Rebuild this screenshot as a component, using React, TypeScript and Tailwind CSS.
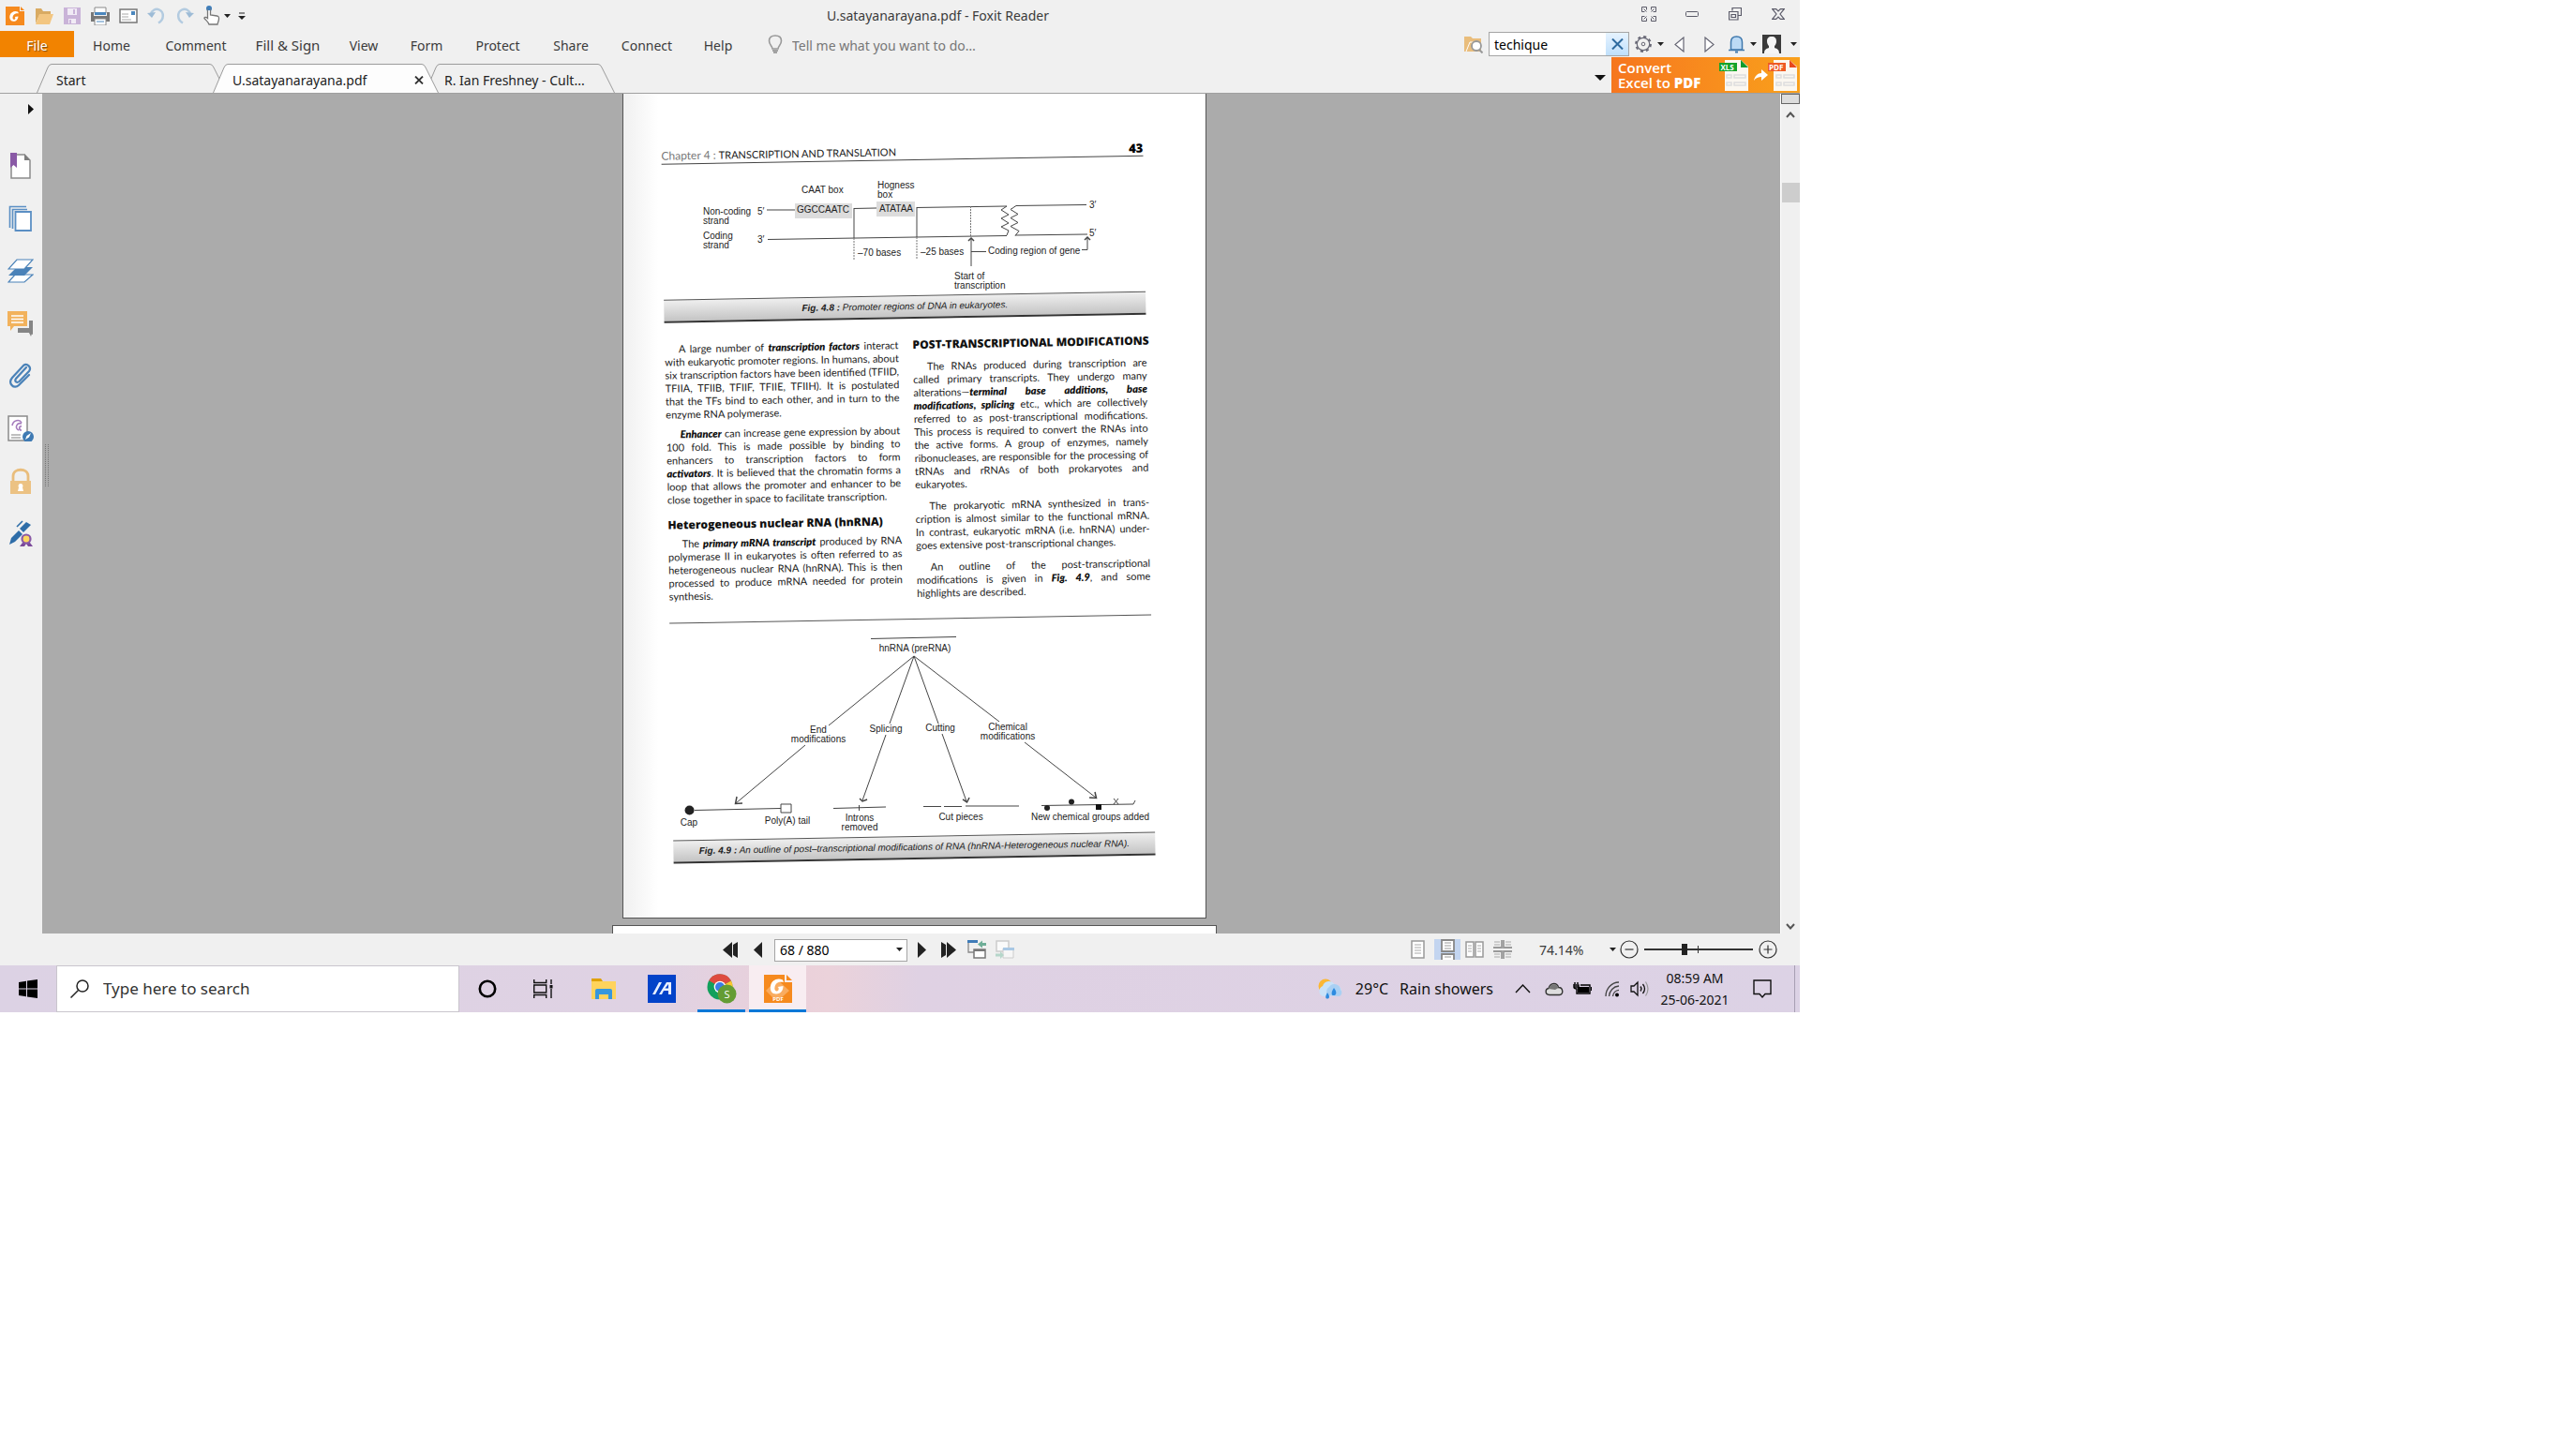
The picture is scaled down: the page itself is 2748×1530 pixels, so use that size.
import React from "react";
import type { ReactNode } from "react";

const INK = "#222";

function Svg({ w, h, children }: { w: number; h: number; children: ReactNode }) {
  return (
    <svg width={w} height={h} viewBox={`0 0 ${w} ${h}`} fill="none" aria-hidden="true" className="block shrink-0">
      {children}
    </svg>
  );
}

function Caret({ big = false }: { big?: boolean }) {
  return big ? (
    <Svg w={12} h={6}>
      <path d="M0 0h12L6 6z" fill="#111" />
    </Svg>
  ) : (
    <Svg w={7} h={4}>
      <path d="M0 0h7L3.500 4z" fill="#222" />
    </Svg>
  );
}

function IconButton({ label, className, children }: { label: string; className: string; children: ReactNode }) {
  return (
    <button type="button" aria-label={label} className={`flex shrink-0 items-center justify-center ${className}`}>
      {children}
    </button>
  );
}

/* ---------- Title bar ---------- */

function FoxitLogo() {
  return (
    <Svg w={20} h={20}>
      <path d="M0 0h15v5h5v15H0z" fill="#f68a1e" />
      <path d="M16 0l4 4h-4z" fill="#f68a1e" />
      <path d="M13 5.500c-3-1.500-7.500 0-8.500 4-.8 3.300.8 6 3.600 6.300 3.200.2 5.200-2.300 5.400-5.300l-3.900.6c.6.500 1 .8.600 1.800-.4 1-1.600 1.300-2.300.4-.9-1.100-.2-3.700 1.100-4.800C10.300 7.500 12 7 14 7.300z" fill="#fff" />
    </Svg>
  );
}

function TitleBar() {
  return (
    <header className="flex h-[33px] items-center">
      <div className="flex h-full w-[265px] shrink-0 items-center pl-1.5">
        <FoxitLogo />
        <IconButton label="Open" className="ml-1.5 w-[30px]">
          <Svg w={20} h={18}>
            <path d="M1 17V1h6l2 3h8v4H5z" fill="#d9ab63" />
            <path d="M5 7h15l-4 11H1z" fill="#f3c681" />
          </Svg>
        </IconButton>
        <IconButton label="Save" className="w-[30px]">
          <Svg w={18} h={18}>
            <path d="M0 0h18v18H0z" fill="#c9b3d8" />
            <path d="M4 1h10v7H4zM5 12h8v5H5z" fill="#f1ebf5" />
            <path d="M10 2h2v5h-2zM6 13h2v4H6z" fill="#c9b3d8" />
          </Svg>
        </IconButton>
        <IconButton label="Print" className="w-[30px]">
          <Svg w={20} h={20}>
            <path d="M4 1h12v6H4z" fill="#fff" stroke="#8a8a8a" />
            <path d="M0 6h3v4h14V6h3v10H0z" fill="#777" />
            <path d="M4 6h12v3H4z" fill="#4a86bd" />
            <path d="M4 13h12v7H4z" fill="#fff" stroke="#8a8a8a" />
            <path d="M6 16h8" stroke="#4a86bd" />
          </Svg>
        </IconButton>
        <IconButton label="Email" className="w-[30px]">
          <Svg w={20} h={16}>
            <path d="M1 1h18v14H1z" fill="#fff" stroke="#777" strokeWidth="1.500" />
            <path d="M13 3h4v4h-4z" fill="#4a86bd" />
            <path d="M3 6h7M3 9h7M3 12h10" stroke="#aaa" />
          </Svg>
        </IconButton>
        <IconButton label="Undo" className="w-[30px]">
          <Svg w={20} h={20}>
            <path d="M4 8c1-4 5-6.500 9-4.500 5 2.500 5.500 10-1 14" stroke="#b3cbe0" strokeWidth="2.500" />
            <path d="M0 7l5 5 4-6z" fill="#9dbbd6" />
          </Svg>
        </IconButton>
        <IconButton label="Redo" className="w-[30px]">
          <Svg w={20} h={20}>
            <path d="M16 8c-1-4-5-6.500-9-4.500-5 2.500-5.500 10 1 14" stroke="#b3cbe0" strokeWidth="2.500" />
            <path d="M20 7l-5 5-4-6z" fill="#9dbbd6" />
          </Svg>
        </IconButton>
        <IconButton label="Touch mode" className="w-[38px] gap-1">
          <Svg w={18} h={21}>
            <circle cx="6" cy="3" r="3" fill="#3c7ebd" />
            <path d="M4.500 13V4c0-2 3-2 3 0v6l7 1c2 .4 2 1 2 3-.2 3-1 3-1.500 6H6c-1-3-3-4-5-6.500-.5-1 1.500-2 3.500 0z" fill="#fff" stroke="#777" strokeWidth="1.300" />
            <path d="M6 2v3" stroke="#3c7ebd" strokeWidth="3" />
          </Svg>
          <Caret />
        </IconButton>
        <IconButton label="Customize toolbar" className="w-[16px]">
          <Svg w={8} h={8}>
            <path d="M1 1h6" stroke="#222" />
            <path d="M0 4h8L4 8z" fill="#222" />
          </Svg>
        </IconButton>
      </div>
      <h1 className="flex-1 text-center text-[14px] leading-5 text-[#3b3b3b]">U.satayanarayana.pdf - Foxit Reader</h1>
      <div className="flex h-full w-[184px] shrink-0 items-center pb-1">
        <IconButton label="Full screen" className="w-[46px] pl-0">
          <Svg w={16} h={16}>
            <path d="M.5 5.500v-5h5M.5 5.500h3M5.500.500v3M10.500.500h5v5M10.500.500v3M15.500 5.500h-3M.5 10.500v5h5M.5 10.500h3M5.500 15.500v-3M10.500 15.500h5v-5M10.500 15.500v-3M15.500 10.500h-3M2.500 2.500l3 3M13.500 2.500l-3 3M2.500 13.500l3-3M13.500 13.500l-3-3" stroke="#5a5a68" />
          </Svg>
        </IconButton>
        <IconButton label="Minimize" className="w-[46px]">
          <Svg w={14} h={6}>
            <rect x=".5" y=".5" width="13" height="5" rx="1" stroke="#5a5a68" />
          </Svg>
        </IconButton>
        <IconButton label="Restore" className="w-[46px]">
          <Svg w={14} h={14}>
            <path d="M4 3.500v-3h9.500v8H10M.5 4.500H10v8.500H.5zM3 7.500h4.500v3H3z" stroke="#5a5a68" strokeWidth="1.200" />
          </Svg>
        </IconButton>
        <IconButton label="Close" className="w-[46px]">
          <Svg w={14} h={12}>
            <path d="M.7.600h4L7 3l2.300-2.400h4L9 6l4.300 5.400h-4L7 9l-2.300 2.400h-4L5 6z" stroke="#5a5a68" strokeWidth="1.200" />
          </Svg>
        </IconButton>
      </div>
    </header>
  );
}

/* ---------- Ribbon menu ---------- */

const menu = [
  { name: "Home", cls: "w-[80px] text-[14px]" },
  { name: "Comment", cls: "w-[100px] text-[14px]" },
  { name: "Fill & Sign", cls: "w-[96px] text-[15px]" },
  { name: "View", cls: "w-[66px] text-[14px]" },
  { name: "Form", cls: "w-[68px] text-[14px]" },
  { name: "Protect", cls: "w-[84px] text-[14px]" },
  { name: "Share", cls: "w-[72px] text-[14px]" },
  { name: "Connect", cls: "w-[90px] text-[14px]" },
  { name: "Help", cls: "w-[62px] text-[14px]" },
];

function MenuBar() {
  return (
    <nav className="flex h-7 items-center text-[#3b3b3b]">
      <button type="button" className="h-7 w-[79px] shrink-0 bg-[#f28300] pt-0.5 text-[14px] text-white [text-shadow:1px_1px_1px_#7a4a10]">
        File
      </button>
      {menu.map((m) => (
        <button key={m.name} type="button" className={`h-7 shrink-0 pt-0.5 whitespace-nowrap ${m.cls}`}>
          {m.name}
        </button>
      ))}
      <label className="ml-[22px] flex items-center gap-[10px]">
        <Svg w={16} h={20}>
          <path d="M5 15c0-3-3.500-4-3.500-8.500C1.500 3 4 1 8 1s6.500 2 6.500 5.500C14.500 11 11 12 11 15z" stroke="#999" strokeWidth="1.600" />
          <path d="M5 17h6M6 19h4" stroke="#888" strokeWidth="1.400" />
        </Svg>
        <input type="text" aria-label="Tell me what you want to do" placeholder="Tell me what you want to do…" className="w-[240px] bg-transparent pt-0.5 text-[14px] text-[#333] outline-none placeholder:text-[#777]" />
      </label>
      <div className="ml-auto flex h-full items-center">
        <Svg w={20} h={20}>
          <path d="M0 2h7l2 2h9v14H0z" fill="#e9bd7c" />
          <path d="M2 18L6 8h4" stroke="#fff" />
          <circle cx="13" cy="12" r="5" fill="#fff" stroke="#999" strokeWidth="1.800" />
          <path d="M16 16l3.500 3.500" stroke="#999" strokeWidth="2" />
        </Svg>
        <div className="ml-1.5 flex h-[26px] w-[150px] border border-[#a5a5a5] bg-white">
          <input type="text" aria-label="Find" defaultValue="techique" className="w-[124px] pl-[5px] text-[14px] text-black outline-none" />
          <IconButton label="Clear search" className="w-6 bg-linear-to-b from-[#e6f3ff] to-[#c0e0fb]">
            <Svg w={13} h={12}>
              <path d="M1 .500l11 11M12 .500l-11 11" stroke="#2d6a9f" strokeWidth="2" />
            </Svg>
          </IconButton>
        </div>
        <IconButton label="Search options" className="ml-0.5 w-[38px] gap-1.5">
          <Svg w={18} h={18}>
            <circle cx="9" cy="9" r="6.700" stroke="#666674" strokeWidth="1.200" />
            <circle cx="9" cy="9" r="8" stroke="#666674" strokeWidth="1.800" strokeDasharray="3.100 3.180" />
            <circle cx="9" cy="9" r="1.800" stroke="#666674" />
          </Svg>
          <Caret />
        </IconButton>
        <IconButton label="Previous result" className="w-[26px]">
          <Svg w={11} h={17}>
            <path d="M10 1v15L1 8.500z" stroke="#666674" strokeWidth="1.200" fill="#fff" />
          </Svg>
        </IconButton>
        <IconButton label="Next result" className="w-[38px]">
          <Svg w={11} h={17}>
            <path d="M1 1v15l9-7.500z" stroke="#666674" strokeWidth="1.200" fill="#fff" />
          </Svg>
        </IconButton>
        <IconButton label="Notifications" className="w-[34px] gap-1.5">
          <Svg w={17} h={20}>
            <path d="M2.500 16V8c0-4 2.500-6 6-6s6 2 6 6v8zM0 16.500h17" fill="#bcdaf5" stroke="#4079ad" strokeWidth="1.500" />
            <path d="M7 18.500h3" stroke="#4079ad" strokeWidth="2" />
          </Svg>
          <Caret />
        </IconButton>
        <IconButton label="Account" className="w-[44px] gap-2.5">
          <Svg w={20} h={20}>
            <path d="M0 0h20v20H0z" fill="#3a3a3a" />
            <path d="M10 2c3.500 0 5 2 5 5 0 2.500-1 4-2 5v2c3 1 5 2 5 6H2c0-4 2-5 5-6v-2c-1-1-2-2.500-2-5 0-3 1.500-5 5-5z" fill="#f5f5f5" />
          </Svg>
          <Caret />
        </IconButton>
      </div>
    </nav>
  );
}

/* ---------- Document tabs ---------- */

function TabShape({ w, fill }: { w: number; fill: string }) {
  return (
    <svg viewBox={`0 0 ${w} 31`} className="absolute inset-0 h-full w-full" aria-hidden="true">
      <path d={`M.5 31L12 4q1.500-3.500 4-3.500H${w - 18}q2.500 0 4 3.500L${w - 0.5} 31`} fill={fill} stroke="#9b9b9b" />
    </svg>
  );
}

function TabRow() {
  return (
    <div className="flex h-[39px] items-end justify-between border-b border-[#a0a0a0]">
      <div role="tablist" className="flex h-[31px] pl-[39px] text-[14px] text-[#222]">
        <button type="button" role="tab" aria-selected="false" className="relative h-full w-[203px] pt-1 text-left">
          <TabShape w={203} fill="#f0f0f0" />
          <span className="relative pl-[21px]">Start</span>
        </button>
        <div className="relative z-10 -ml-[15px] flex h-full w-[241px] items-center pt-1">
          <TabShape w={241} fill="#fdfdfd" />
          <button type="button" role="tab" aria-selected="true" className="relative flex-1 pl-[21px] text-left">
            U.satayanarayana.pdf
          </button>
          <IconButton label="Close tab" className="relative mr-[15px] h-5 w-[12px]">
            <Svg w={10} h={9}>
              <path d="M1 .500l8 8M9 .500l-8 8" stroke="#333" strokeWidth="1.800" />
            </Svg>
          </IconButton>
        </div>
        <button type="button" role="tab" aria-selected="false" className="relative -ml-[15px] h-full w-[203px] pt-1 text-left">
          <TabShape w={203} fill="#f0f0f0" />
          <span className="relative pl-[21px]">R. Ian Freshney - Cult...</span>
        </button>
      </div>
      <div className="flex h-[38px] items-center gap-1.5">
        <button type="button" aria-label="Tab list" className="pt-1.5">
          <Caret big />
        </button>
        <a href="#convert" aria-label="Convert Excel to PDF" className="relative flex h-[38px] w-[201px] overflow-hidden bg-linear-to-r from-[#f6761f] to-[#f9a01b] pl-[7px] text-white">
          <span className="flex flex-col justify-center font-['Open_Sans'] text-[15px] leading-4 font-semibold">
            <span>Convert</span>
            <span>
              Excel to <b className="font-extrabold">PDF</b>
            </span>
          </span>
          <span className="ml-auto">
            <svg width="88" height="38" viewBox="0 0 88 38" aria-hidden="true">
              <path d="M8 3h17l8 7v26H8z" fill="#fbf7f0" />
              <path d="M25 3l8 8h-8z" fill="#0e9b2f" />
              <path d="M2 6h19v9H2z" fill="#14a32a" />
              <text x="3.500" y="13.500" fontSize="8" fontWeight="700" fill="#fff" fontFamily="Open Sans">XLS</text>
              <path d="M10 19h5v3h-5zM18 19h12v3H18zM10 27h5v3h-5zM18 27h12v3H18z" stroke="#ddd" strokeWidth="1.500" fill="none" />
              <path d="M39 25c1-5 4-8 8-8v-4l7 6-7 6v-4c-3 0-6 1-8 4z" fill="#fff" />
              <path d="M60 3h17l8 7v26H60z" fill="#fbf7f0" />
              <path d="M77 3l8 8h-8z" fill="#e8481c" />
              <path d="M54 6h19v9H54z" fill="#ee5a24" />
              <text x="55" y="13.500" fontSize="8" fontWeight="700" fill="#fff" fontFamily="Open Sans">PDF</text>
              <path d="M63 19h5v3h-5zM71 19h11v3H71zM63 27h5v3h-5zM71 27h11v3H71z" stroke="#ddd" strokeWidth="1.500" fill="none" />
            </svg>
          </span>
        </a>
      </div>
    </div>
  );
}

/* ---------- Sidebar ---------- */

const panels: { label: string; icon: ReactNode }[] = [
  {
    label: "Bookmarks",
    icon: (
      <>
        <path d="M4 2h14l6 6v19H4z" fill="#fff" stroke="#8b8b8b" strokeWidth="1.500" />
        <path d="M18 1l6 7h-6z" fill="#7d7d7d" />
        <path d="M3 0h7v16l-3.500-3L3 16z" fill="#8a5aa6" />
      </>
    ),
  },
  {
    label: "Page thumbnails",
    icon: (
      <>
        <path d="M20 1.500H2.500V24M21 4.500H5.500V25" stroke="#5b8fc4" strokeWidth="1.600" />
        <path d="M8.500 7H25v20H8.500z" fill="#fff" stroke="#5b8fc4" strokeWidth="1.800" />
      </>
    ),
  },
  {
    label: "Layers",
    icon: (
      <>
        <path d="M8 18h19l-9 8H1z" fill="#fff" stroke="#4a82b8" strokeWidth="1.200" />
        <path d="M10 10h17l-9 9H1z" fill="#4a82b8" />
        <path d="M10 2h17l-9 10H1z" fill="#fff" stroke="#4a82b8" strokeWidth="1.200" />
      </>
    ),
  },
  {
    label: "Comments",
    icon: (
      <>
        <path d="M23 11h4v15l-4-2H11v-5h12z" fill="#858585" />
        <path d="M22 22h5l-2 6z" fill="#858585" />
        <path d="M0 1h21v16H7l-4 5v-5H0z" fill="#f2b25c" />
        <path d="M4 6h13M4 9.500h13M4 13h13" stroke="#fff" strokeWidth="1.400" />
      </>
    ),
  },
  {
    label: "Attachments",
    icon: (
      <path d="M20 5L9 17c-2 3 1 5 3.500 3L23 9c3-4-2-9-6-6L5 16c-5 6 2 13 7 8l11-11" stroke="#4a82b8" strokeWidth="2.200" strokeLinecap="round" />
    ),
  },
  {
    label: "Digital signatures",
    icon: (
      <>
        <path d="M1 1h20v26H1z" fill="#fff" stroke="#8b8b8b" strokeWidth="1.500" />
        <path d="M5 11c1-6 8-7 10-3M15 9c-5-2-8 5-3 7M15 12c-3-1-3 4 0 4" stroke="#a57cbd" strokeWidth="1.600" />
        <path d="M4 21h10M4 24h10" stroke="#aaa" strokeWidth="1.300" />
        <circle cx="22" cy="23" r="6" fill="#3f7ab3" />
        <path d="M19 26l1.500-4L25 19l-2 4.500z" fill="#fff" />
      </>
    ),
  },
  {
    label: "Security",
    icon: (
      <>
        <path d="M6 15V9c0-9 16-9 16 0v6" stroke="#e9bd7c" strokeWidth="2.800" />
        <path d="M3 14h22v14H3z" fill="#ecc283" />
        <path d="M14 17a2.500 2.500 0 012 4l1 4h-6l1-4a2.500 2.500 0 012-4z" fill="#fff" />
      </>
    ),
  },
  {
    label: "Sign",
    icon: (
      <>
        <path d="M2 26l2-7 8-8 4 4-8 8z" fill="#2e6da8" />
        <path d="M13 9l7-7 5 3-8 8z" fill="#2e6da8" />
        <path d="M10 7l6-6" stroke="#2e6da8" strokeWidth="1.600" />
        <path d="M16 24l-3 4h5l2-3 2 3h5l-3-4z" fill="#7b4a9a" />
        <circle cx="20" cy="20" r="4.500" fill="#ffd75e" stroke="#8a5aa6" strokeWidth="2.200" />
      </>
    ),
  },
];

function Sidebar() {
  return (
    <aside className="flex w-[45px] shrink-0 flex-col bg-[#f0f0f0]">
      <IconButton label="Expand panel" className="ml-auto h-[32px] w-6">
        <Svg w={6} h={11}>
          <path d="M0 0l6 5.500L0 11z" fill="#111" />
        </Svg>
      </IconButton>
      <div className="flex flex-col gap-7 pt-[31px] pl-2">
        {panels.map((p) => (
          <button key={p.label} type="button" aria-label={p.label} className="w-7">
            <Svg w={28} h={28}>{p.icon}</Svg>
          </button>
        ))}
      </div>
    </aside>
  );
}

/* ---------- Page content ---------- */

function Line({ children, last = false, indent = false }: { children: ReactNode; last?: boolean; indent?: boolean }) {
  return (
    <span
      className={`block whitespace-nowrap ${last ? "text-left" : "text-justify [text-align-last:justify]"} ${indent ? "pl-[15px]" : ""}`}
    >
      {children}
    </span>
  );
}

const Term = ({ children }: { children: ReactNode }) => <b className="font-extrabold text-[#111] italic">{children}</b>;

function Caption({ no, children }: { no: string; children: ReactNode }) {
  return (
    <p className="h-[25px] border-t border-b-2 border-t-[#555] border-b-[#333] bg-linear-to-b from-[#efefef] to-[#c4c4c4] text-center font-['Liberation_Sans'] text-[10px] leading-[21px] whitespace-nowrap text-[#222] italic">
      <b>Fig. {no} :</b> {children}
    </p>
  );
}

type LabelProps = { x: number; y: number; children: string; mid?: boolean };
const L = ({ x, y, children, mid }: LabelProps) => (
  <text x={x} y={y} textAnchor={mid ? "middle" : "start"}>
    {children}
  </text>
);

function PromoterFigure() {
  return (
    <svg viewBox="712 171 514 144" className="block h-[144px] w-full overflow-visible" fontFamily="Liberation Sans" fontSize="10" fill={INK}>
      <g transform="rotate(1 976 540)">
        <path d="M848 217h61v16h-61zM935 215h41v16h-41z" fill="#dcdcdc" />
        <g stroke="#444" fill="none">
          <path d="M818 224H848M911 222.500L935 222M978 221.500L1074 220M819 255.500L1074 251.500M1083 251L1160 250M1084 219.500L1159 218.500" />
          <path d="M911 222V254M978 221V253" />
          <path d="M911 254V277M978 253V277M1035.500 220V252" strokeDasharray="2 1" stroke="#777" />
          <path d="M1074 220l-6 4 8 5-8 4 8 5-8 4 8 4-2 5M1084 219.500l-6 4 8 5-8 4 8 5-8 4 9 5-4 5" />
          <path d="M1036 284V255M1036 268.500H1052M1154 266.500H1160V254" />
          <path d="M1033 257L1036 254L1039 257M1157 256L1160 253L1163 256" strokeWidth="1.500" />
        </g>
        <L x={855} y={206}>CAAT box</L>
        <L x={936} y={201}>Hogness</L>
        <L x={936} y={211}>box</L>
        <L x={878} y={227} mid>GGCCAATC</L>
        <L x={956} y={226} mid>ATATAA</L>
        <L x={750} y={229}>Non-coding</L>
        <L x={750} y={239}>strand</L>
        <L x={808} y={229}>5′</L>
        <L x={750} y={255}>Coding</L>
        <L x={750} y={265}>strand</L>
        <L x={808} y={259}>3′</L>
        <L x={1162} y={222}>3′</L>
        <L x={1162} y={252}>5′</L>
        <L x={915} y={273}>–70 bases</L>
        <L x={982} y={272}>–25 bases</L>
        <L x={1054} y={271}>Coding region of gene</L>
        <L x={1018} y={298}>Start of</L>
        <L x={1018} y={308}>transcription</L>
      </g>
    </svg>
  );
}

function ModificationFigure() {
  return (
    <svg viewBox="712 660 514 231" className="block h-[231px] w-full overflow-visible" fontFamily="Liberation Sans" fontSize="10" fill={INK}>
      <g transform="rotate(1 976 540)">
        <g stroke="#444" fill="none">
          <path d="M929 680.500L1020 678.500" />
          <path d="M884 773L975 699L949 771M1001 771L975 699L1066 769" />
          <path d="M859 794L785 856M945 783L920 853M1005 782L1031 854M1093 791L1169 850" />
          <path d="M786 849L784.500 856.500L792 856M917 851L920 854L925 852M1027 852L1031.500 855L1034 850M1168 844L1169.500 850.500L1162 850" strokeWidth="1.500" />
          <path d="M741 863.500L833 861.500M889 861.500L945 860M916.500 858V864M985 859.500H1004M1007 859.500H1026M1030 859H1087" />
          <path d="M1111 858.500L1209 857L1211 853M1188 851L1193 857M1193 851L1188 857" />
          <path d="M833 857h11v9h-11z" fill="#fff" />
        </g>
        <circle cx="735.500" cy="863.500" r="5" />
        <circle cx="1117" cy="861" r="3" />
        <circle cx="1143" cy="854.500" r="3" />
        <path d="M1169 857h6v6h-6z" fill="#111" />
        <L x={976} y={694} mid>hnRNA (preRNA)</L>
        <L x={873} y={781} mid>End</L>
        <L x={873} y={791} mid>modifications</L>
        <L x={945} y={780} mid>Splicing</L>
        <L x={1003} y={779} mid>Cutting</L>
        <L x={1075} y={778} mid>Chemical</L>
        <L x={1075} y={788} mid>modifications</L>
        <L x={735} y={880} mid>Cap</L>
        <L x={840} y={878} mid>Poly(A) tail</L>
        <L x={917} y={875} mid>Introns</L>
        <L x={917} y={885} mid>removed</L>
        <L x={1025} y={874} mid>Cut pieces</L>
        <L x={1163} y={874} mid>New chemical groups added</L>
      </g>
    </svg>
  );
}

function BookPage() {
  return (
    <article className="mx-auto h-[880px] w-[623px] overflow-hidden border border-t-0 border-[#555] bg-linear-to-r from-[#f0f0f0] via-white via-6% to-white">
      <div className="h-full -rotate-1 pr-[60px] pl-[47px] font-['Lato'] text-[11px] leading-[14px] text-[#222]">
        <div className="flex h-[71px] items-end justify-between border-b border-[#444]">
          <p className="text-[12px] leading-4">
            <span className="text-[#777]">Chapter 4 : </span>
            <span className="text-[11px]">TRANSCRIPTION AND TRANSLATION</span>
          </p>
          <p className="font-['Open_Sans'] text-[13px] leading-4 font-extrabold text-black">43</p>
        </div>
        <PromoterFigure />
        <Caption no="4.8">Promoter regions of DNA in eukaryotes.</Caption>
        <div className="grid h-[321px] grid-cols-2 gap-x-[15px] border-b border-[#555] pt-[21px]">
          <div className="flex flex-col gap-[7px]">
            <p>
              <Line indent>A large number of <Term>transcription factors</Term> interact</Line>
              <Line>with eukaryotic promoter regions. In humans, about</Line>
              <Line>six transcription factors have been identified (TFIID,</Line>
              <Line>TFIIA, TFIIB, TFIIF, TFIIE, TFIIH). It is postulated</Line>
              <Line>that the TFs bind to each other, and in turn to the</Line>
              <Line last>enzyme RNA polymerase.</Line>
            </p>
            <p>
              <Line indent><Term>Enhancer</Term> can increase gene expression by about</Line>
              <Line>100 fold. This is made possible by binding to</Line>
              <Line>enhancers to transcription factors to form</Line>
              <Line><Term>activators</Term>. It is believed that the chromatin forms a</Line>
              <Line>loop that allows the promoter and enhancer to be</Line>
              <Line last>close together in space to facilitate transcription.</Line>
            </p>
            <div>
              <h3 className="pt-1.5 pb-1.5 font-['Open_Sans'] text-[12px] leading-[14px] font-extrabold text-[#111]">Heterogeneous nuclear RNA (hnRNA)</h3>
              <p>
                <Line indent>The <Term>primary mRNA transcript</Term> produced by RNA</Line>
                <Line>polymerase II in eukaryotes is often referred to as</Line>
                <Line>heterogeneous nuclear RNA (hnRNA). This is then</Line>
                <Line>processed to produce mRNA needed for protein</Line>
                <Line last>synthesis.</Line>
              </p>
            </div>
          </div>
          <div className="flex flex-col gap-[9px]">
            <h2 className="font-['Open_Sans'] text-[12px] leading-[14px] font-extrabold whitespace-nowrap text-[#111]">POST-TRANSCRIPTIONAL MODIFICATIONS</h2>
            <p>
              <Line indent>The RNAs produced during transcription are</Line>
              <Line>called primary transcripts. They undergo many</Line>
              <Line>alterations—<Term>terminal base additions, base</Term></Line>
              <Line><Term>modifications, splicing</Term> etc., which are collectively</Line>
              <Line>referred to as post-transcriptional modifications.</Line>
              <Line>This process is required to convert the RNAs into</Line>
              <Line>the active forms. A group of enzymes, namely</Line>
              <Line>ribonucleases, are responsible for the processing of</Line>
              <Line>tRNAs and rRNAs of both prokaryotes and</Line>
              <Line last>eukaryotes.</Line>
            </p>
            <p>
              <Line indent>The prokaryotic mRNA synthesized in trans-</Line>
              <Line>cription is almost similar to the functional mRNA.</Line>
              <Line>In contrast, eukaryotic mRNA (i.e. hnRNA) under-</Line>
              <Line last>goes extensive post-transcriptional changes.</Line>
            </p>
            <p>
              <Line indent>An outline of the post-transcriptional</Line>
              <Line>modifications is given in <Term>Fig. 4.9</Term>, and some</Line>
              <Line last>highlights are described.</Line>
            </p>
          </div>
        </div>
        <ModificationFigure />
        <Caption no="4.9">An outline of post–transcriptional modifications of RNA (hnRNA-Heterogeneous nuclear RNA).</Caption>
      </div>
    </article>
  );
}

function Viewer() {
  return (
    <div className="flex">
      <Sidebar />
      <main className="relative min-w-0 flex-1 bg-[#ababab]">
        <span className="absolute top-[374px] left-[3px] h-[45px] w-[4px] border-x border-dotted border-[#777]" />
        <div className="pl-[7px]">
          <BookPage />
          <div className="mx-auto mt-[7px] h-[9px] w-[645px] border border-b-0 border-[#555] bg-white" />
        </div>
      </main>
      <div className="flex w-[21px] shrink-0 flex-col items-center border-l border-white bg-[#f0f0f0]">
        <div className="h-[11px] w-full border border-[#666] bg-[#dcdcdc]" />
        <IconButton label="Scroll up" className="h-[22px] w-full">
          <Svg w={10} h={7}>
            <path d="M1 6l4-4.500L9 6" stroke="#555" strokeWidth="2" />
          </Svg>
        </IconButton>
        <div className="mt-[62px] h-[21px] w-[19px] bg-[#cdcdcd]" />
        <IconButton label="Scroll down" className="mt-auto h-[16px] w-full">
          <Svg w={10} h={7}>
            <path d="M1 1l4 4.500L9 1" stroke="#555" strokeWidth="2" />
          </Svg>
        </IconButton>
      </div>
    </div>
  );
}

/* ---------- Status bar ---------- */

function PageGlyph({ kind }: { kind: "single" | "scroll" | "facing" | "facing-scroll" }) {
  const lines = "M4 5h7M4 8h7M4 11h7M4 14h7";
  if (kind === "single")
    return (
      <Svg w={15} h={20}>
        <path d="M1 1h13v18H1z" fill="#fff" stroke="#999" strokeWidth="1.500" />
        <path d={lines} stroke="#aaa" />
      </Svg>
    );
  if (kind === "scroll")
    return (
      <Svg w={15} h={22}>
        <path d="M1 1v12h13V1zM1 22v-6h13v6" fill="#fff" stroke="#888" strokeWidth="1.800" />
        <path d="M4 4h7M4 7h7M4 10h7M4 19h7" stroke="#999" />
      </Svg>
    );
  if (kind === "facing")
    return (
      <Svg w={20} h={19}>
        <path d="M1 1h8v16H1zM11 1h8v16h-8z" fill="#fff" stroke="#999" strokeWidth="1.500" />
        <path d="M3 5h4M3 8h4M3 11h4M13 5h4M13 8h4M13 11h4" stroke="#aaa" />
      </Svg>
    );
  return (
    <Svg w={20} h={20}>
      <path d="M9 0v8H0M11 0v8h9M9 20v-8H0M11 20v-8h9" stroke="#999" strokeWidth="1.800" />
      <path d="M1 2h6M1 5h6M13 2h6M13 5h6M1 15h6M1 18h6M13 15h6M13 18h6" stroke="#aaa" />
    </Svg>
  );
}

function StatusBar() {
  return (
    <footer className="flex h-[34px] items-center bg-[#f0f0f0]">
      <div className="ml-auto flex items-center">
        <IconButton label="First page" className="w-[30px]">
          <Svg w={16} h={17}>
            <path d="M10 0v17L0 8.500zM16 0v17l-5-3V3z" fill="#222" />
          </Svg>
        </IconButton>
        <IconButton label="Previous page" className="mr-1 w-[28px]">
          <Svg w={9} h={17}>
            <path d="M9 0v17L0 8.500z" fill="#222" />
          </Svg>
        </IconButton>
        <div className="relative h-6 w-[142px]">
          <select aria-label="Page" className="h-6 w-full appearance-none border border-[#a5a5a5] bg-white pl-[5px] text-[14px] leading-5 text-black">
            <option>68 / 880</option>
          </select>
          <span className="pointer-events-none absolute top-2.5 right-[5px]">
            <Caret />
          </span>
        </div>
        <IconButton label="Next page" className="w-[30px]">
          <Svg w={9} h={17}>
            <path d="M0 0v17l9-8.500z" fill="#222" />
          </Svg>
        </IconButton>
        <IconButton label="Last page" className="w-[28px]">
          <Svg w={16} h={17}>
            <path d="M6 0v17l10-8.500zM0 0v17l5-3V3z" fill="#222" />
          </Svg>
        </IconButton>
        <IconButton label="Previous view" className="w-[32px]">
          <Svg w={20} h={20}>
            <path d="M1 1v12h6M1 1h9" fill="none" stroke="#888" strokeWidth="1.300" />
            <path d="M0 0h11v3H0z" fill="#3f7cb8" />
            <path d="M11 4.500l5-4v2.500h4v3h-4v2.500z" fill="#6fae98" />
            <path d="M7 10h12v9H7z" fill="#fff" stroke="#777" strokeWidth="1.500" />
            <path d="M7 10h12v2H7z" fill="#777" />
          </Svg>
        </IconButton>
        <IconButton label="Next view" className="w-[28px]">
          <Svg w={20} h={20}>
            <path d="M1 1h13v11H1z" fill="#fafafa" stroke="#ccc" strokeWidth="1.500" />
            <path d="M8 9h11v10H8z" fill="#f6f6f6" stroke="#ccc" />
            <path d="M8 8h12v3H8z" fill="#a9c8e4" />
            <path d="M9 16l-4-4v2.500H0v3h5V20z" fill="#b6d6ca" />
          </Svg>
        </IconButton>
      </div>
      <div className="ml-[412px] flex items-center pr-6">
        <IconButton label="Single page" className="w-[32px] pr-1">
          <PageGlyph kind="single" />
        </IconButton>
        <IconButton label="Continuous" className="h-[22px] w-[28px] bg-[#c3d5f0]">
          <PageGlyph kind="scroll" />
        </IconButton>
        <IconButton label="Facing" className="w-[30px]">
          <PageGlyph kind="facing" />
        </IconButton>
        <IconButton label="Continuous facing" className="w-[30px]">
          <PageGlyph kind="facing-scroll" />
        </IconButton>
        <button type="button" className="ml-6 flex w-[82px] items-center justify-between text-[14px] text-[#3b3b3b]">
          74.14% <Caret />
        </button>
        <IconButton label="Zoom out" className="ml-1 w-[20px]">
          <Svg w={20} h={20}>
            <circle cx="10" cy="10" r="9" stroke="#333" strokeWidth="1.200" />
            <path d="M5.500 10h9" stroke="#333" strokeWidth="1.200" />
          </Svg>
        </IconButton>
        <div className="relative mx-1.5 flex h-4 w-[116px] items-center">
          <input
            type="range"
            aria-label="Zoom"
            min={0}
            max={100}
            defaultValue={36}
            className="h-[2px] w-full appearance-none bg-[#333] [&::-webkit-slider-thumb]:h-3 [&::-webkit-slider-thumb]:w-1.5 [&::-webkit-slider-thumb]:appearance-none [&::-webkit-slider-thumb]:bg-[#222]"
          />
          <span className="absolute top-1 left-[57px] h-2 w-px bg-[#333]" />
        </div>
        <IconButton label="Zoom in" className="w-[20px]">
          <Svg w={20} h={20}>
            <circle cx="10" cy="10" r="9" stroke="#333" strokeWidth="1.200" />
            <path d="M5.500 10h9M10 5.500v9" stroke="#333" strokeWidth="1.200" />
          </Svg>
        </IconButton>
      </div>
    </footer>
  );
}

/* ---------- Taskbar ---------- */

function Taskbar() {
  return (
    <nav className="flex h-[50px] items-center bg-[#dcd2e4] bg-[linear-gradient(90deg,#dcd2e4_0%,#dfd2e3_36%,#ead0da_44%,#ebd2da_46%,#dfd1e3_51%,#dcd2e5_100%)] text-[#111]">
      <IconButton label="Start" className="h-full w-[60px]">
        <Svg w={20} h={20}>
          <path d="M0 3l8-1.200V9.500H0zM9 1.600L20 0v9.500H9zM0 10.500h8v7.700L0 17zM9 10.500h11V20L9 18.400z" fill="#000" />
        </Svg>
      </IconButton>
      <label className="flex h-full w-[430px] items-center gap-[15px] border border-[#c9c5cd] bg-white pl-[14px]">
        <Svg w={20} h={20}>
          <circle cx="13" cy="7" r="6" stroke="#222" strokeWidth="1.500" />
          <path d="M8.500 11.500L.5 19.500" stroke="#222" strokeWidth="1.500" />
        </Svg>
        <input type="text" aria-label="Search" placeholder="Type here to search" className="w-[300px] text-[17px] outline-none placeholder:text-[#333]" />
      </label>
      <IconButton label="Cortana" className="h-full w-[60px]">
        <Svg w={20} h={20}>
          <circle cx="10" cy="10" r="8.200" stroke="#000" strokeWidth="2.600" />
        </Svg>
      </IconButton>
      <IconButton label="Task view" className="h-full w-[58px]">
        <Svg w={21} h={20}>
          <path d="M.7 0v3.500h13V0M.7 20v-3.500h13V20M.7 6h13v8H.7zM19 0v5M19 10v10" stroke="#111" strokeWidth="1.400" />
          <path d="M17.500 6h3v3.500h-3z" fill="#111" />
        </Svg>
      </IconButton>
      <IconButton label="File Explorer" className="h-full w-[72px]">
        <Svg w={28} h={24}>
          <path d="M1 1h10l2 3v4H1z" fill="#dfa100" />
          <path d="M1 4h26v19H1z" fill="#ffd35c" />
          <path d="M5 23V14q0-2 2-2h14q2 0 2 2v9h-4v-5H9v5z" fill="#3797dd" />
        </Svg>
      </IconButton>
      <IconButton label="MyASUS" className="h-full w-[52px]">
        <Svg w={30} h={30}>
          <path d="M0 0h30v30H0z" fill="#0243c9" />
          <path d="M5 21L12 8h3L8 21zM12 21l8-13h5v13h-3v-4h-5l-2 4zM18.500 14.500H22V10z" fill="#e8f0ff" />
        </Svg>
      </IconButton>
      <IconButton label="Chrome" className="relative ml-3 h-full w-[51px]">
        <Svg w={32} h={32}>
          <circle cx="14" cy="14" r="13.500" fill="#12a05c" />
          <path d="M14 14L2.300 7.200A13.500 13.500 0 0126 7.500z" fill="#de4b3f" />
          <path d="M14 14l12-6.500A13.500 13.500 0 0118 27z" fill="#fcc62f" />
          <circle cx="14" cy="14" r="6.300" fill="#fff" />
          <circle cx="14" cy="14" r="5" fill="#3c7de6" />
          <circle cx="21.500" cy="21.500" r="10" fill="#649c34" />
          <text x="21.500" y="25.500" fontSize="11" fill="#fff" textAnchor="middle" fontFamily="Open Sans">S</text>
        </Svg>
        <span className="absolute inset-x-0 bottom-0 h-[3px] bg-[#0078d7]" />
      </IconButton>
      <IconButton label="Foxit Reader" className="relative ml-1 h-full w-[61px] bg-[#f8edf1]">
        <Svg w={30} h={30}>
          <path d="M0 0h22v8h8v22H0z" fill="#f68a1e" />
          <path d="M24 0l6 6h-6z" fill="#f68a1e" />
          <path d="M2 17l12-12 13 12-9 8H10z" fill="#f9ac60" />
          <path d="M20 5.500C14 3 8 6 7 12c-.8 5 1.500 8.500 6 8.500 5 0 7.500-4 7.500-8.500l-6 1c1 .6 1.500 1.200 1 3-.6 1.800-2.700 2-3.600.5-1.300-2 0-6 1.800-7.500C15.500 7.600 18 7.500 21 8z" fill="#fff" />
          <text x="15" y="28" fontSize="6" fontWeight="700" fill="#fff" textAnchor="middle" fontFamily="Open Sans">PDF</text>
        </Svg>
        <span className="absolute inset-x-0 bottom-0 h-[3px] bg-[#0078d7]" />
      </IconButton>

      <div className="ml-auto flex h-full items-center">
        <button type="button" className="flex items-center text-[16px]">
          <Svg w={26} h={24}>
            <circle cx="8" cy="9" r="7.500" fill="#fbb733" />
            <path d="M5 20a6 6 0 010-11 7 7 0 0113-1 6 6 0 014 11z" fill="#c9e2f8" />
            <path d="M11 19a5.500 5.500 0 011-9 6.500 6.500 0 0112 3 4 4 0 01-2 7z" fill="#a9d0f3" />
            <path d="M17 11q4 5 1.500 7.500-2 1.200-3.500 0Q13.500 16 17 11zM10 16q3 4 1.500 6-1.500 1.200-3 0Q7.500 20 10 16z" fill="#2e8be0" />
          </Svg>
          <span className="ml-[14px] whitespace-nowrap">29°C</span>
          <span className="ml-3 whitespace-nowrap">Rain showers</span>
        </button>
        <IconButton label="Show hidden icons" className="ml-2 w-[46px]">
          <Svg w={17} h={10}>
            <path d="M1 9l7.500-8L16 9" stroke="#111" strokeWidth="1.400" />
          </Svg>
        </IconButton>
        <IconButton label="OneDrive" className="w-[22px]">
          <Svg w={20} h={15}>
            <path d="M5 13.500C-.5 13 .5 7 4 6.500 6 0 13 0 14.500 5.500c5 0 6 7.500 1 8z" fill="#ddd" stroke="#333" strokeWidth="1.400" />
            <path d="M4 7c2-6 9-6 10.500-1L11 8z" fill="#777" />
          </Svg>
        </IconButton>
        <IconButton label="Battery" className="ml-1.5 w-[26px]">
          <Svg w={20} h={14}>
            <path d="M1 2v3q0 2 3 2v5h14V3H8M2 0v2M5 0v2M1 3h5v2H1z" stroke="#000" strokeWidth="1.400" />
            <path d="M5 5h12v6H5z" fill="#000" />
            <path d="M19 5h1v4h-1z" fill="#000" />
          </Svg>
        </IconButton>
        <IconButton label="Network" className="ml-1 w-[30px]">
          <Svg w={16} h={17}>
            <path d="M1 16C1 8 7 1 15 1M4.500 16C5 10 9 5.500 15 5M8.500 16c.4-3.500 3-6.500 6.500-6.700" stroke="#444" strokeWidth="1.300" />
            <circle cx="13" cy="14.500" r="2" fill="#000" />
          </Svg>
        </IconButton>
        <IconButton label="Volume" className="w-[28px]">
          <Svg w={20} h={18}>
            <path d="M1 6h3l4-4v14l-4-4H1zM11 6.500q2 2.500 0 5M13.500 4q4 5 0 10" stroke="#111" strokeWidth="1.300" />
            <path d="M16.500 1.500q5 7.500 0 15" stroke="#999" strokeWidth="1.200" />
          </Svg>
        </IconButton>
        <button type="button" className="flex w-[90px] flex-col items-center text-[14px] leading-[23px] whitespace-nowrap">
          <span>08:59 AM</span>
          <span>25-06-2021</span>
        </button>
        <IconButton label="Notifications" className="ml-2.5 w-[34px]">
          <Svg w={20} h={21}>
            <path d="M1 1h18v14.500h-6L10 19l-3-3.500H1z" stroke="#111" strokeWidth="1.400" />
          </Svg>
        </IconButton>
        <button type="button" aria-label="Show desktop" className="ml-[17px] h-full w-[6px] border-l border-[#a79fb3]" />
      </div>
    </nav>
  );
}

export default function App() {
  return (
    <div className="min-h-screen bg-white">
      <div className="w-full max-w-[1920px] bg-[#f0f0f0] font-['Noto_Sans','Open_Sans',sans-serif]">
        <TitleBar />
        <MenuBar />
        <TabRow />
        <Viewer />
        <StatusBar />
        <Taskbar />
      </div>
    </div>
  );
}
